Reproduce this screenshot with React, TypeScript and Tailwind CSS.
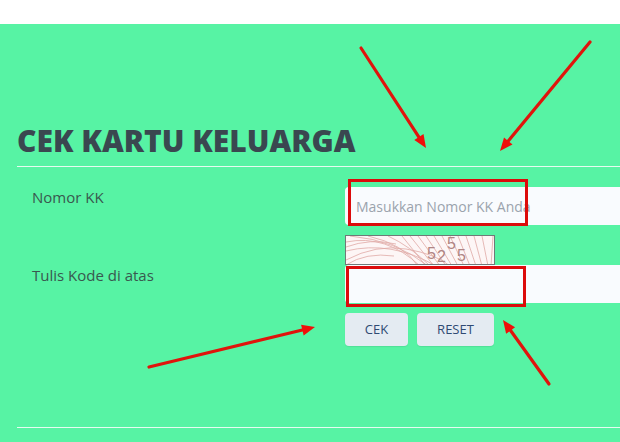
import React from "react";

function Arrow({ x1, y1, x2, y2 }: { x1: number; y1: number; x2: number; y2: number }) {
  const dx = x2 - x1;
  const dy = y2 - y1;
  const len = Math.hypot(dx, dy);
  const ux = dx / len;
  const uy = dy / len;
  const headLen = 13;
  const headHalf = 5.5;
  const bx = x2 - ux * headLen;
  const by = y2 - uy * headLen;
  const pts = `${x2},${y2} ${bx - uy * headHalf},${by + ux * headHalf} ${bx + uy * headHalf},${by - ux * headHalf}`;
  return (
    <g>
      <line x1={x1} y1={y1} x2={bx} y2={by} stroke="#e0140c" strokeWidth={3.2} strokeLinecap="round" />
      <polygon points={pts} fill="#f00f0a" />
    </g>
  );
}

function Captcha() {
  const lines = [
    "M0 6 Q40 -2 74 30", "M0 15 Q45 4 90 30", "M0 24 Q30 8 60 13 T104 30", "M4 0 Q50 4 82 30",
    "M22 0 Q58 8 72 30", "M42 0 Q64 10 84 30", "M56 0 L80 30", "M64 0 L88 30", "M72 0 L94 30", "M80 0 L100 30",
    "M88 0 L106 30", "M96 0 L112 30", "M104 0 L118 30", "M112 0 L124 30", "M120 0 L130 30", "M128 0 L136 30", "M136 0 L142 30",
    "M147 0 L145 30", "M0 29 Q20 16 48 20", "M0 11 Q24 2 50 8",
  ];
  return (
    <div className="relative h-[30px] w-[150px] overflow-hidden border border-[#6f7a78] bg-[#fdf6f6]">
      <svg width="150" height="30" className="absolute left-0 top-0">
        {lines.map((d) => (
          <path key={d} d={d} fill="none" stroke="#dfa9a6" strokeWidth={0.8} />
        ))}
      </svg>
      <div className="relative flex items-start pl-[81px] text-[16px] leading-none text-[#b08583] [font-family:'Liberation_Sans',sans-serif]">
        <span className="mt-[10px] w-[10px]">5</span>
        <span className="mt-[13px] w-[10px]">2</span>
        <span className="mt-0 w-[10px]">5</span>
        <span className="mt-[12px] w-[10px]">5</span>
      </div>
    </div>
  );
}

export default function App() {
  return (
    <div className="relative h-[442px] w-[620px] overflow-hidden bg-white pt-6 [font-family:'Open_Sans',sans-serif]">
      <div className="h-[418px] bg-[#57f3a4] pl-[17px]">
        <h1 className="pt-[97px] text-[30px] font-extrabold leading-[40px] text-[#3a4750]">CEK KARTU KELUARGA</h1>
        <div className="mt-[5px] border-t border-[#e6fbf0]" />
        <div className="flex pt-5">
          <div className="w-[328px] pl-[15px] text-[15px] leading-[21px] text-[#39584f]">
            <div>Nomor KK</div>
            <div className="mt-[57px]">Tulis Kode di atas</div>
          </div>
          <div className="flex-1">
            <input
              placeholder="Masukkan Nomor KK Anda"
              className="block h-[38px] w-full rounded-l-sm bg-[#f9fbfe] px-[11px] text-[14px] text-[#3a4750] outline-none placeholder:text-[#9ba3ad]"
            />
            <div className="mt-[10px]">
              <Captcha />
            </div>
            <input className="block h-[38px] w-full rounded-l-sm bg-[#f9fbfe] px-[11px] outline-none" />
            <div className="mt-[10px] flex gap-[9px]">
              <button className="h-[33px] w-[63px] rounded-sm bg-[#e4ebf2] text-[13px] text-[#2f4a73] shadow-[0_1px_1px_rgba(0,0,0,0.08)]">CEK</button>
              <button className="h-[33px] w-[77px] rounded-sm bg-[#e4ebf2] text-[13px] text-[#2f4a73] shadow-[0_1px_1px_rgba(0,0,0,0.08)]">RESET</button>
            </div>
          </div>
        </div>
        <div className="mt-[81px] border-t border-[#e6fbf0]" />
      </div>
      <div className="absolute left-[348px] top-[179px] h-[47px] w-[180px] border-[3px] border-[#dc0b0b]" />
      <div className="absolute left-[346px] top-[266px] h-[41px] w-[180px] border-[3px] border-[#dc0b0b]" />
      <svg width="620" height="442" className="pointer-events-none absolute left-0 top-0">
        <Arrow x1={361} y1={48} x2={426} y2={148} />
        <Arrow x1={590} y1={42} x2={500} y2={151} />
        <Arrow x1={149} y1={367} x2={315} y2={327} />
        <Arrow x1={549} y1={384} x2={503} y2={320} />
      </svg>
    </div>
  );
}
